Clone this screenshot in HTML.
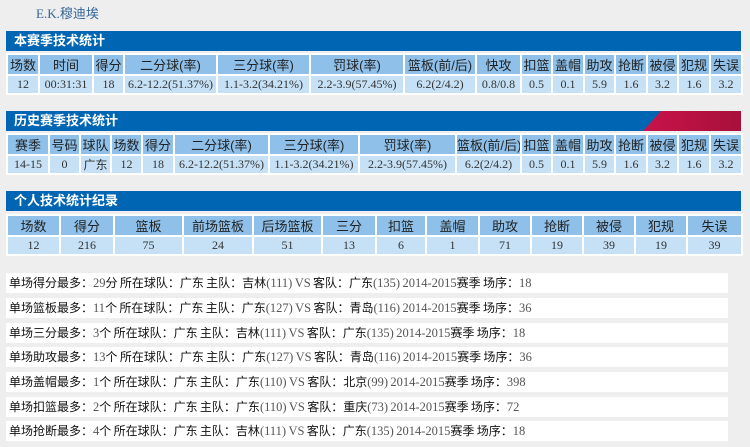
<!DOCTYPE html>
<html><head><meta charset="utf-8"><style>
body{margin:0;width:750px;height:447px;background:#efeeee;font-family:"Liberation Serif","Noto Sans CJK SC",serif;font-size:12px;color:#333;position:relative;overflow:hidden}
.name{position:absolute;left:36px;top:3px;color:#336699;font-size:13px}
.bar{position:absolute;left:6px;width:735px;height:20px;background:#0066b3;color:#fff;font-weight:bold;font-size:13px;line-height:20px;font-family:"Liberation Sans","Noto Sans CJK SC",sans-serif;overflow:hidden}
.bar span{padding-left:8px}
table{position:absolute;left:6px;width:735px;border-collapse:collapse;table-layout:fixed}
td{border:2px solid #fff;text-align:center;height:17px;padding:0;white-space:nowrap;overflow:hidden}
tr.h td{background:#8ec0ea;color:#222;font-size:13px;font-family:"Liberation Sans","Noto Sans CJK SC",sans-serif}
tr.d td{background:#c6e1f6;color:#333}
.rec{position:absolute;left:6px;width:722px;height:20px;background:#fff;line-height:20px;color:#111;padding-left:3px;box-sizing:border-box;font-family:"Liberation Sans","Noto Sans CJK SC",sans-serif;font-size:12px;word-spacing:-1px}
.rec b{font-weight:normal;color:#555;font-family:"Liberation Serif",serif;font-size:12.5px}
.red{position:absolute;right:0;top:0;width:98px;height:20px;background:linear-gradient(90deg,#c8134a,#a8103a);clip-path:polygon(18px 0,100% 0,100% 100%,0 100%)}
</style></head><body>
<div class="name">E.K.穆迪埃</div>
<div class="bar" style="top:31px"><span>本赛季技术统计</span></div>
<table style="top:53px"><colgroup><col style="width:32px"><col style="width:54px"><col style="width:31px"><col style="width:93px"><col style="width:93px"><col style="width:94px"><col style="width:72px"><col style="width:45px"><col style="width:31px"><col style="width:32px"><col style="width:31px"><col style="width:32px"><col style="width:31px"><col style="width:32px"><col style="width:32px"></colgroup>
<tr class="h"><td>场数</td><td>时间</td><td>得分</td><td>二分球(率)</td><td>三分球(率)</td><td>罚球(率)</td><td>篮板(前/后)</td><td>快攻</td><td>扣篮</td><td>盖帽</td><td>助攻</td><td>抢断</td><td>被侵</td><td>犯规</td><td>失误</td></tr>
<tr class="d"><td>12</td><td>00:31:31</td><td>18</td><td>6.2-12.2(51.37%)</td><td>1.1-3.2(34.21%)</td><td>2.2-3.9(57.45%)</td><td>6.2(2/4.2)</td><td>0.8/0.8</td><td>0.5</td><td>0.1</td><td>5.9</td><td>1.6</td><td>3.2</td><td>1.6</td><td>3.2</td></tr></table>
<div class="bar" style="top:111px"><span>历史赛季技术统计</span><div class="red"></div></div>
<table style="top:133px"><colgroup><col style="width:42px"><col style="width:31px"><col style="width:31px"><col style="width:31px"><col style="width:32px"><col style="width:95px"><col style="width:90px"><col style="width:97px"><col style="width:65px"><col style="width:31px"><col style="width:32px"><col style="width:31px"><col style="width:32px"><col style="width:31px"><col style="width:32px"><col style="width:32px"></colgroup>
<tr class="h"><td>赛季</td><td>号码</td><td>球队</td><td>场数</td><td>得分</td><td>二分球(率)</td><td>三分球(率)</td><td>罚球(率)</td><td>篮板(前/后)</td><td>扣篮</td><td>盖帽</td><td>助攻</td><td>抢断</td><td>被侵</td><td>犯规</td><td>失误</td></tr>
<tr class="d"><td>14-15</td><td>0</td><td style="font-family:'Liberation Sans','Noto Sans CJK SC',sans-serif">广东</td><td>12</td><td>18</td><td>6.2-12.2(51.37%)</td><td>1.1-3.2(34.21%)</td><td>2.2-3.9(57.45%)</td><td>6.2(2/4.2)</td><td>0.5</td><td>0.1</td><td>5.9</td><td>1.6</td><td>3.2</td><td>1.6</td><td>3.2</td></tr></table>
<div class="bar" style="top:191px"><span>个人技术统计纪录</span></div>
<table style="top:214px"><colgroup><col style="width:53px"><col style="width:54px"><col style="width:69px"><col style="width:70px"><col style="width:69px"><col style="width:54px"><col style="width:50px"><col style="width:53px"><col style="width:52px"><col style="width:52px"><col style="width:52px"><col style="width:52px"><col style="width:55px"></colgroup>
<tr class="h"><td>场数</td><td>得分</td><td>篮板</td><td>前场篮板</td><td>后场篮板</td><td>三分</td><td>扣篮</td><td>盖帽</td><td>助攻</td><td>抢断</td><td>被侵</td><td>犯规</td><td>失误</td></tr>
<tr class="d"><td>12</td><td>216</td><td>75</td><td>24</td><td>51</td><td>13</td><td>6</td><td>1</td><td>71</td><td>19</td><td>39</td><td>19</td><td>39</td></tr></table>
<div class="rec" style="top:273px">单场得分最多：<b>29</b>分 所在球队：广东 主队：吉林<b>(111)</b> <b>VS</b> 客队：广东<b>(135)</b> <b>2014-2015</b>赛季 场序：<b>18</b></div>
<div class="rec" style="top:298px">单场篮板最多：<b>11</b>个 所在球队：广东 主队：广东<b>(127)</b> <b>VS</b> 客队：青岛<b>(116)</b> <b>2014-2015</b>赛季 场序：<b>36</b></div>
<div class="rec" style="top:323px">单场三分最多：<b>3</b>个 所在球队：广东 主队：吉林<b>(111)</b> <b>VS</b> 客队：广东<b>(135)</b> <b>2014-2015</b>赛季 场序：<b>18</b></div>
<div class="rec" style="top:347px">单场助攻最多：<b>13</b>个 所在球队：广东 主队：广东<b>(127)</b> <b>VS</b> 客队：青岛<b>(116)</b> <b>2014-2015</b>赛季 场序：<b>36</b></div>
<div class="rec" style="top:372px">单场盖帽最多：<b>1</b>个 所在球队：广东 主队：广东<b>(110)</b> <b>VS</b> 客队：北京<b>(99)</b> <b>2014-2015</b>赛季 场序：<b>398</b></div>
<div class="rec" style="top:397px">单场扣篮最多：<b>2</b>个 所在球队：广东 主队：广东<b>(110)</b> <b>VS</b> 客队：重庆<b>(73)</b> <b>2014-2015</b>赛季 场序：<b>72</b></div>
<div class="rec" style="top:421px">单场抢断最多：<b>4</b>个 所在球队：广东 主队：吉林<b>(111)</b> <b>VS</b> 客队：广东<b>(135)</b> <b>2014-2015</b>赛季 场序：<b>18</b></div>
</body></html>
